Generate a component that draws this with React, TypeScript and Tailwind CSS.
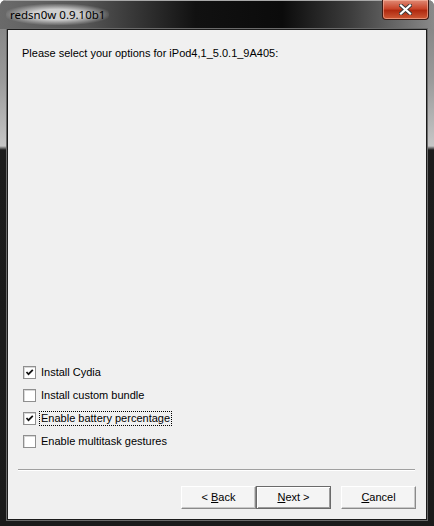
import React from 'react';

const options = [
	{ label: 'Install Cydia', checked: true, focus: false },
	{ label: 'Install custom bundle', checked: false, focus: false },
	{ label: 'Enable battery percentage', checked: true, focus: true },
	{ label: 'Enable multitask gestures', checked: false, focus: false },
];

function CheckBox({ checked }: { checked: boolean }) {
	return (
		<span className="flex h-[13px] w-[13px] shrink-0 items-center justify-center border border-[#8f8f8f] bg-white shadow-[inset_1px_1px_0_#d8d8d8]">
			{checked && (
				<svg width="9" height="9" viewBox="0 0 9 9">
					<path d="M1.5 4 L3.5 6.2 L7.8 1.8" fill="none" stroke="#111" strokeWidth="1.7" />
				</svg>
			)}
		</span>
	);
}

function Button({ children, isDefault }: { children: React.ReactNode; isDefault?: boolean }) {
	return (
		<button
			className={`h-[23px] w-[75px] bg-[#f4f4f4] text-[11px] text-black ${
				isDefault
					? 'border border-[#6a6a6a] shadow-[inset_1px_1px_0_#fff,inset_-1px_-1px_0_#9a9a9a]'
					: 'border border-t-white border-l-white border-r-[#8a8a8a] border-b-[#8a8a8a] shadow-[inset_-1px_-1px_0_#c8c8c8]'
			}`}
		>
			{children}
		</button>
	);
}

export default function App() {
	return (
		<div
			className="relative flex h-[526px] w-[434px] flex-col overflow-hidden rounded-t-[6px] bg-[linear-gradient(to_bottom,#7d7d7d_0px,#9a9a9a_80px,#c6c6c6_146px,#1c1c1c_150px,#1a1a1a_100%)]"
			style={{ fontFamily: '"Liberation Sans", Arial, sans-serif' }}
		>
			{/* title bar */}
			<div className="flex h-[29px] shrink-0 items-center bg-[linear-gradient(to_right,#6a6a6a_0%,#555_20%,#111_45%,#0b0b0b_65%,#3a3a3a_80%,#8a8a8a_100%)] pl-[6px] shadow-[inset_0_1px_0_#a8a8a8]">
				<span
					className="rounded-[10px] bg-[radial-gradient(ellipse_at_center,rgba(255,255,255,0.7)_35%,rgba(255,255,255,0)_75%)] px-[4px] py-[2px] text-[11.5px] text-black"
					style={{ fontFamily: '"Noto Sans", "Open Sans", sans-serif' }}
				>
					redsn0w 0.9.10b1
				</span>
			</div>
			<div className="absolute right-[5px] top-0 flex h-[20px] w-[47px] items-center justify-center rounded-b-[4px] border border-t-0 border-[#3d1a14] bg-[linear-gradient(to_bottom,#e08a75_0%,#c9462b_45%,#b02a10_55%,#cf5a36_100%)] shadow-[inset_0_0_0_1px_rgba(255,200,180,0.5)]">
				<svg width="13" height="11" viewBox="0 0 13 11">
					<path d="M2 1.5 L11 9.5 M11 1.5 L2 9.5" stroke="#3a3a3a" strokeWidth="4" strokeLinecap="square" />
					<path d="M2 1.5 L11 9.5 M11 1.5 L2 9.5" stroke="#fff" strokeWidth="2.2" strokeLinecap="square" />
				</svg>
			</div>

			{/* client area */}
			<div className="mx-[7px] mb-[6px] flex flex-1 flex-col border border-[#1b1b1b] bg-[#f0f0f0] shadow-[0_0_0_1px_#6a6a6a]">
				<p className="pl-[14px] pt-[17px] text-[11px] leading-[13px] text-black">
					Please select your options for iPod4,1_5.0.1_9A405:
				</p>
				<div className="flex-1" />
				<div className="flex flex-col pl-[15px]">
					{options.map((o) => (
						<label key={o.label} className="flex h-[23px] items-center gap-[4px] text-[11px] text-black">
							<CheckBox checked={o.checked} />
							<span className={o.focus ? 'px-px leading-[13px] outline-1 outline-offset-0 outline-dotted outline-black' : 'px-px'}>
								{o.label}
							</span>
						</label>
					))}
				</div>
				<div className="ml-[10px] mr-[11px] mt-[16px] border-t border-b border-t-[#a0a0a0] border-b-white" />
				<div className="flex justify-end pr-[10px] pb-[10px] pt-[15px]">
					<Button>
						&lt; <u>B</u>ack
					</Button>
					<Button isDefault>
						<u>N</u>ext &gt;
					</Button>
					<div className="w-[10px]" />
					<Button>
						<u>C</u>ancel
					</Button>
				</div>
			</div>
		</div>
	);
}
